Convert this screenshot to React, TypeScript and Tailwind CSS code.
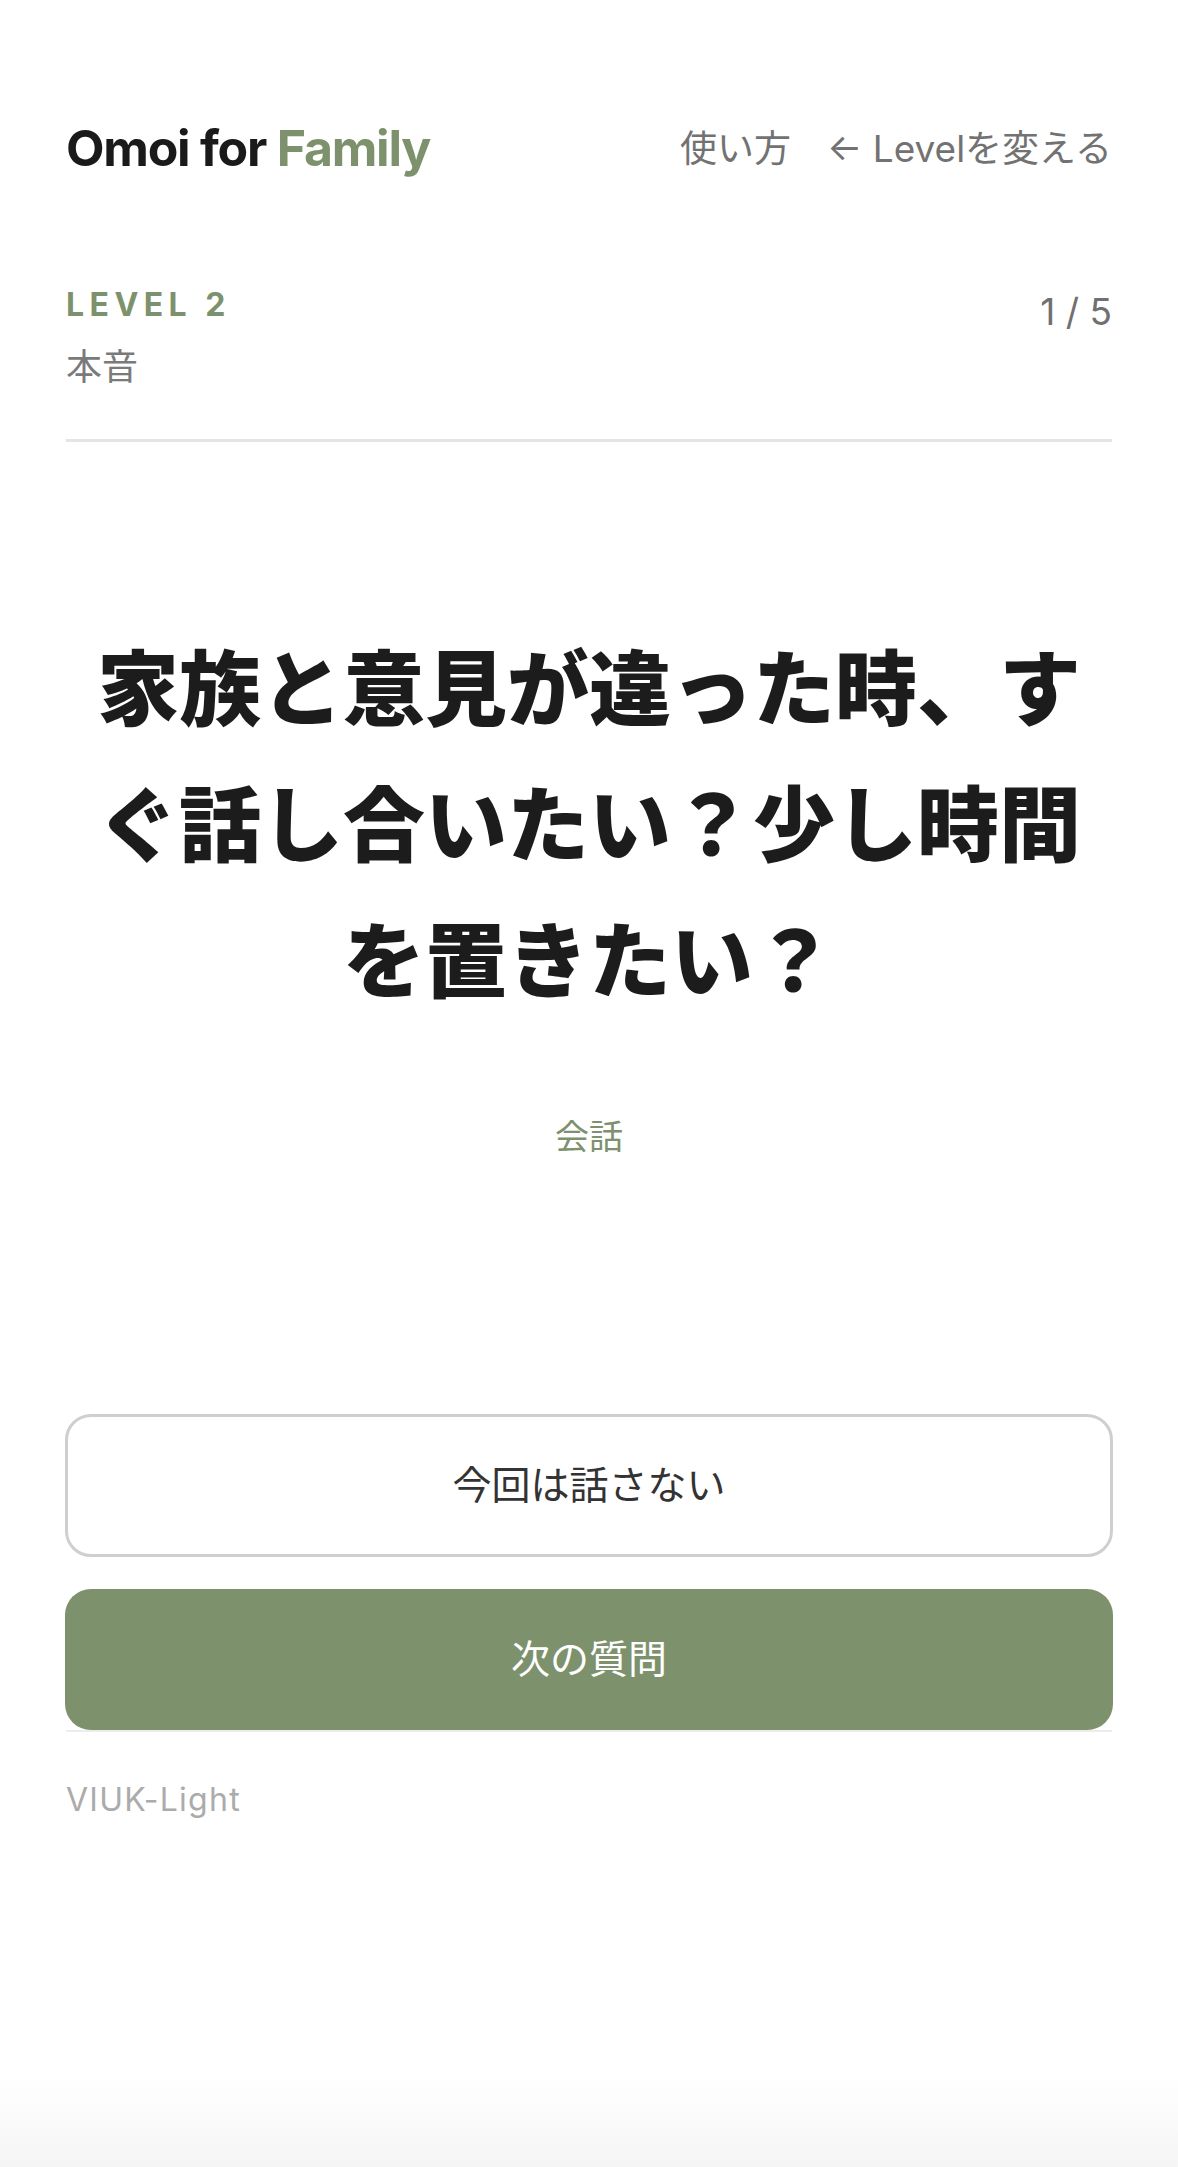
import React from 'react';

function App() {
  const font = { fontFamily: '"Inter", "Noto Sans CJK JP", sans-serif' };

  return (
    <div className="flex h-[2167px] flex-col bg-white text-[#1a1a1a]" style={font}>
      {/* Header */}
      <header className="mt-[118px] flex h-[60px] items-center justify-between px-[66px]">
        <h1 className="text-[50px] font-bold leading-none tracking-[-0.025em]">
          Omoi for <span className="text-[#7d916d]">Family</span>
        </h1>
        <nav className="flex items-center gap-[36px] text-[37px] leading-none text-[#727272]">
          <span>使い方</span>
          <span>← Levelを変える</span>
        </nav>
      </header>

      {/* Level info */}
      <div className="mt-[107px] flex items-start justify-between px-[66px]">
        <div>
          <p className="h-[40px] text-[32px] font-bold leading-[40px] tracking-[0.17em] text-[#7d916d]">
            LEVEL 2
          </p>
          <p className="mt-[20px] h-[44px] text-[36px] leading-[44px] text-[#7a7a7a]">本音</p>
        </div>
        <p className="mt-[7px] text-[37px] leading-[40px] text-[#707070]">1 / 5</p>
      </div>

      <div className="mx-[66px] mt-[50px] h-[3px] bg-[#e4e4e4]" />

      {/* Question */}
      <div className="mt-[180px] px-[66px] text-center">
        <h2 className="text-[82px] font-black leading-[136px] text-[#1c1c1c]">
          家族と意見が違った時、すぐ話し合いたい？少し時間を置きたい？
        </h2>
        <p className="mt-[85px] text-[34px] leading-[44px] text-[#7d916d]">会話</p>
      </div>

      {/* Actions */}
      <div className="mt-[255px] flex flex-col gap-[32px] px-[65px]">
        <button className="h-[143px] rounded-[26px] border-[3px] border-[#cfcfcf] bg-white text-[39px] text-[#333333]">
          今回は話さない
        </button>
        <button className="h-[141px] rounded-[26px] bg-[#7d916d] text-[39px] text-white">
          次の質問
        </button>
      </div>

      <footer className="mx-[66px] h-[2px] bg-[#ececec]" />
      <p className="mt-[48px] px-[66px] text-[32px] leading-[40px] tracking-[0.04em] text-[#ababab]">
        VIUK-Light
      </p>

      <div className="flex-1" />
      <div className="h-[90px] bg-gradient-to-b from-white to-[#f5f5f5]" />
    </div>
  );
}

export default App;
